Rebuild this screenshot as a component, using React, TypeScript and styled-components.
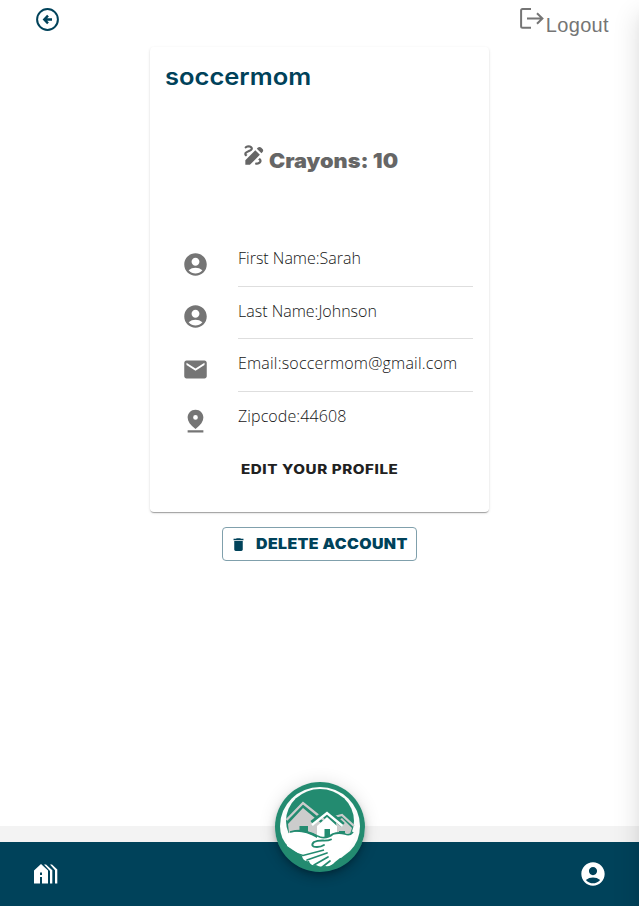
import React from "react";
import styled, { createGlobalStyle } from "styled-components";
import {
  MdAccountCircle,
  MdDelete,
  MdDraw,
  MdEmail,
} from "react-icons/md";

const GlobalStyle = createGlobalStyle`
  * { box-sizing: border-box; }
  body { margin: 0; background: #fff; }
  button { border: 0; padding: 0; background: none; }
`;

const Page = styled.div`
  position: relative;
  display: flex;
  flex-direction: column;
  height: 906px;
  overflow: hidden;
  background: #fff;
`;

const Header = styled.header`
  display: flex;
  justify-content: space-between;
  height: 47px;
  padding: 7px 30px 0 35px;
`;

const IconButton = styled.button`
  display: flex;
  align-self: flex-start;
  color: #00425a;
`;

const Logout = styled.button`
  display: flex;
  align-items: flex-start;
  color: #757575;
  font: 20px/24px "Liberation Sans", Arial, sans-serif;
  letter-spacing: 0.35px;
`;

const LogoutLabel = styled.span`
  padding-top: 6px;
  margin-left: -0.5px;
`;

const Main = styled.main`
  display: flex;
  flex: 1;
  flex-direction: column;
  align-items: center;
`;

const Card = styled.section`
  display: flex;
  flex-direction: column;
  width: 339px;
  height: 465px;
  padding: 14px 16px 0;
  border-radius: 4px;
  box-shadow: 0 2px 1px -1px rgba(0, 0, 0, 0.2), 0 1px 1px rgba(0, 0, 0, 0.14),
    0 1px 3px rgba(0, 0, 0, 0.12);
`;

const Wide = styled.span<{ $stretch: number; $width: number }>`
  display: block;
  flex: none;
  width: ${(p) => p.$width}px;
  text-align: left;
  white-space: nowrap;
  transform: scaleX(${(p) => p.$stretch});
  transform-origin: left;
`;

const UserName = styled.h1`
  margin: 0 0 0 -1px;
  color: #00425a;
  font: 600 23.5px/32px Inter, sans-serif;
`;

const Crayons = styled.div`
  display: flex;
  justify-content: center;
  height: 98px;
  margin-top: 51px;
  gap: 1px;
  color: #666;
  font: 900 20px/34px Inter, sans-serif;

  > svg {
    margin: -2px 1px 0 -1px;
  }
`;

const Details = styled.ul`
  margin: 0;
  padding: 0;
  list-style: none;
`;

const Detail = styled.li`
  display: flex;
  height: 52.5px;
  color: #757575;

  > svg {
    flex: none;
    margin: 8.5px 29px 0 16px;
  }

  &:last-child > div {
    border-bottom: 0;
  }
`;

const DetailText = styled.div<{ $spacing: number }>`
  flex: 1;
  height: 44.9px;
  padding-top: 4px;
  border-bottom: 1px solid #dedede;
  color: #161616;
  font: 300 16px/24px "Open Sans", sans-serif;
  letter-spacing: ${(p) => p.$spacing}px;
`;

const EditButton = styled.button`
  align-self: center;
  margin-top: 5px;
  color: #212121;
  font: 800 13.2px/24px Inter, sans-serif;
  letter-spacing: 0.5px;
`;

const DeleteButton = styled.button`
  display: flex;
  align-items: center;
  width: 195px;
  height: 34px;
  margin-top: 15px;
  padding-left: 7px;
  gap: 9px;
  border: 1px solid #80a0ac;
  border-radius: 4px;
  color: #00425a;
  font: 900 14.6px/24px Inter, sans-serif;
  letter-spacing: 0.35px;
`;

const Strip = styled.div`
  height: 16px;
  background: #f3f3f3;
`;

const BottomBar = styled.nav`
  position: relative;
  display: flex;
  align-items: center;
  justify-content: space-between;
  height: 64px;
  padding: 0 32px 0 34px;
  background: #00425a;
  color: #fff;
`;

const LogoBadge = styled.button`
  position: absolute;
  top: -60px;
  left: 275px;
  width: 90px;
  height: 90px;
  border-radius: 50%;
  box-shadow: 0 3px 5px -1px rgba(0, 0, 0, 0.2), 0 6px 10px rgba(0, 0, 0, 0.14),
    0 1px 18px rgba(0, 0, 0, 0.12);
`;

const Drawer = styled.aside`
  position: absolute;
  top: 0;
  left: 100%;
  width: 240px;
  height: 100%;
  box-shadow: 0 8px 10px -5px rgba(0, 0, 0, 0.08),
    0 16px 24px 2px rgba(0, 0, 0, 0.12);
`;

const BackIcon = () => (
  <svg width="25" height="25" viewBox="0 0 25 25" fill="none" stroke="currentColor" strokeWidth="2">
    <circle cx="12.5" cy="12.5" r="10.4" />
    <path d="M17 12.5H9.5M13 8.7L9.3 12.5L13 16.3" strokeWidth="2.4" />
  </svg>
);

const LogoutIcon = () => (
  <svg width="27" height="24" viewBox="0 0 27 24" fill="none" stroke="currentColor" strokeWidth="2">
    <path d="M12 2.1H3.6Q2.1 2.1 2.1 3.6V19.3Q2.1 20.8 3.6 20.8H12M8 11.5H23.4M18 6.3L23.4 11.5L18 16.7" />
  </svg>
);

const PinIcon = ({ size }: { size: number }) => (
  <svg width={size} height={size} viewBox="0 0 24 24" fill="currentColor">
    <path
      fillRule="evenodd"
      d="M12 1.5C8 1.5 5 4.5 5 8.4C5 11.8 7.3 15.1 12 18.6C16.7 15.1 19 11.8 19 8.4C19 4.5 16 1.5 12 1.5ZM12 10.5A2.1 2.1 0 1 1 12 6.3A2.1 2.1 0 0 1 12 10.5ZM5 19.8H19V21.8H5Z"
    />
  </svg>
);

const HousesIcon = () => (
  <svg width="24" height="20" viewBox="0 0 24 20" fill="currentColor">
    <path fillRule="evenodd" d="M0 6.5L7 0L14 6.5V19.5H8V13H6V19.5H0ZM6 8.5V11H8V8.5Z" />
    <path d="M10 0.5H12L18.3 6.3V19.5H16V7ZM16 0.5H18L23.3 5.5V19.5H21V6.3Z" />
  </svg>
);

const Logo = () => (
  <svg width="90" height="90" viewBox="0 0 90 90">
    <circle cx="45" cy="45" r="45" fill="#238b70" />
    <path d="M5 44A40 39 0 0 1 85 44Q85 59 75 69L66 76L14 65Q5 57 5 44Z" fill="#fbfcfb" />
    <ellipse cx="45" cy="39" rx="34" ry="32" fill="#238b70" />
    <path d="M13 42L28 26L46 41L42 53Q29 45 14 51Z" fill="#ccc" />
    <path d="M61 40L67 36L77 46L75 52H62Z" fill="#ccc" />
    <path d="M11.5 38L28 21L49 38M59 35L67 33L79 44" fill="none" stroke="#ccc" strokeWidth="2.3" />
    <path d="M13 40L28 24.5L45 38" fill="none" stroke="#238b70" strokeWidth="0.8" />
    <path d="M42 44L52 35L62 44V57H42Z" fill="#fff" />
    <path d="M37 41L52 29L68 43" fill="none" stroke="#238b70" strokeWidth="5" />
    <path d="M37 43L52 31L67.5 44" fill="none" stroke="#fff" strokeWidth="2.5" />
    <path d="M24.5 44H33V52H24.5ZM49.5 47H55V57H49.5ZM64 49H70V55H64Z" fill="#238b70" />
    <path d="M11 52Q25 46 42 56Q50 57 56 53Q69 49 80 53L74 68L65 76L60 80Q56 85 50 84Q46 86 41 83Q35 84 34 79Q28 80 27 74L12 64Z" fill="#fff" />
    <path d="M15 50Q23 48 29 49Q35 51 45 55Q52 57 58 52Q64 50 70 52Q75 54 78 50" fill="none" stroke="#238b70" strokeWidth="1.8" />
    <path d="M56 57.5C51 60 45 57 39 60C36 63 37 65 42 65Q46 65 49 63" fill="none" stroke="#238b70" strokeWidth="1.9" strokeLinecap="round" />
    <path d="M8 61Q14 70 28 73.5L49 68" fill="none" stroke="#238b70" strokeWidth="1.5" />
    <path d="M32 78L52 71M39 83L53 75M46 86L55 79" fill="none" stroke="#238b70" strokeWidth="1.7" strokeLinecap="round" />
  </svg>
);

const details = [
  { icon: MdAccountCircle, text: "First Name:Sarah", spacing: 0 },
  { icon: MdAccountCircle, text: "Last Name:Johnson", spacing: 0 },
  { icon: MdEmail, text: "Email:soccermom@gmail.com", spacing: 0.2 },
  { icon: PinIcon, text: "Zipcode:44608", spacing: 0.1 },
];

export default function App() {
  return (
    <>
      <GlobalStyle />
      <Page>
        <Header>
          <IconButton aria-label="Back"><BackIcon /></IconButton>
          <Logout><LogoutIcon /><LogoutLabel>Logout</LogoutLabel></Logout>
        </Header>
        <Main>
          <Card>
            <UserName><Wide $stretch={1.085} $width={146}>soccermom</Wide></UserName>
            <Crayons>
              <MdDraw size={26} />
              <Wide $stretch={1.085} $width={129}>Crayons: 10</Wide>
            </Crayons>
            <Details>
              {details.map(({ icon: Icon, text, spacing }) => (
                <Detail key={text}>
                  <Icon size={27} />
                  <DetailText $spacing={spacing}>{text}</DetailText>
                </Detail>
              ))}
            </Details>
            <EditButton><Wide $stretch={1.15} $width={157}>EDIT YOUR PROFILE</Wide></EditButton>
          </Card>
          <DeleteButton>
            <MdDelete size={17} />
            <Wide $stretch={1.09} $width={151}>DELETE ACCOUNT</Wide>
          </DeleteButton>
        </Main>
        <Strip />
        <BottomBar>
          <HousesIcon />
          <MdAccountCircle size={28} />
          <LogoBadge aria-label="Home"><Logo /></LogoBadge>
        </BottomBar>
        <Drawer />
      </Page>
    </>
  );
}
